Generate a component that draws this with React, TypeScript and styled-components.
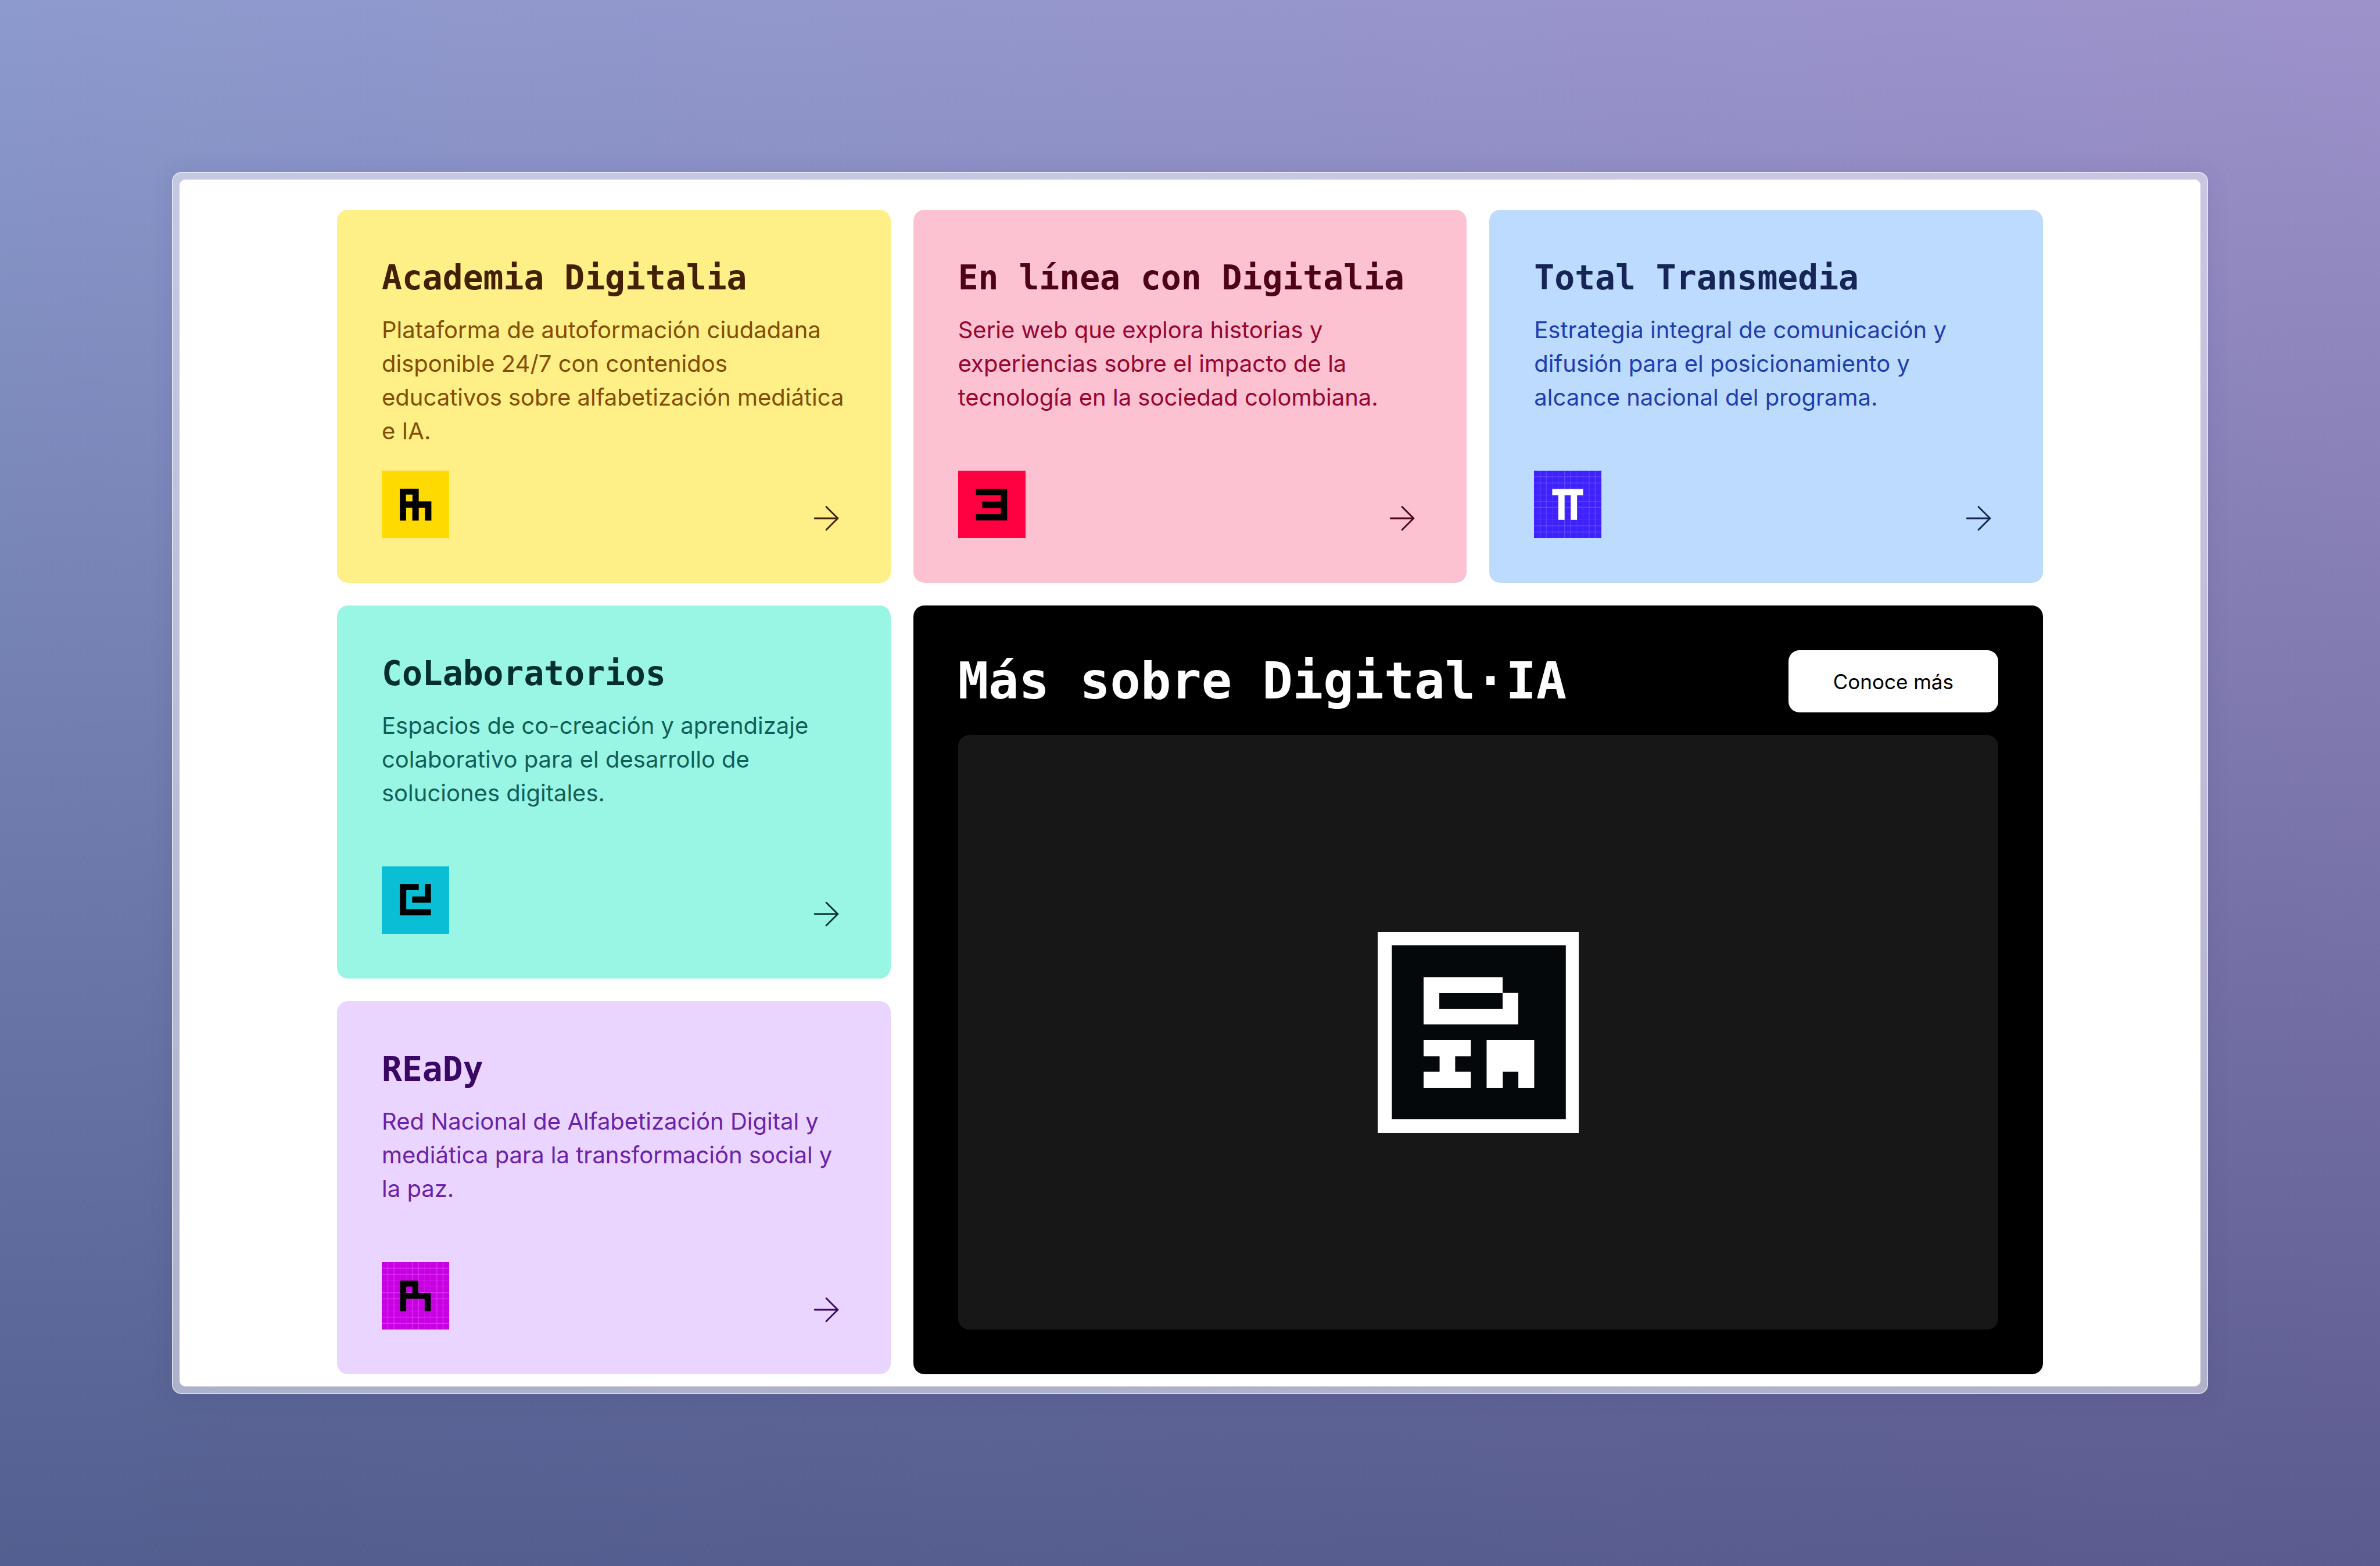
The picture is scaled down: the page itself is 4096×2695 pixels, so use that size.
import React from "react";
import styled, { createGlobalStyle } from "styled-components";
import { ArrowRight } from "lucide-react";

const GlobalStyle = createGlobalStyle`
  *, *::before, *::after { box-sizing: border-box; }
  html, body { margin: 0; padding: 0; }
  h2, p { margin: 0; }
`;

const mono = `"DejaVu Sans Mono", "Liberation Mono", monospace`;
const sans = `Inter, "Noto Sans", sans-serif`;

const Backdrop = styled.div`
  min-height: 100vh;
  padding: 296px;
  display: grid;
  background:
    linear-gradient(180deg, rgba(24, 34, 82, 0) 0%, rgba(24, 36, 82, 0.5) 100%),
    linear-gradient(90deg, #8d9acd 0%, #9e92cb 100%);
`;

const Frame = styled.div`
  padding: 11px;
  border: 2px solid rgba(255, 255, 255, 0.75);
  border-radius: 16px;
  background: rgba(255, 255, 255, 0.5);
  background-clip: padding-box;
  box-shadow: 0 4px 40px rgba(60, 50, 110, 0.12);
  display: grid;
`;

const Page = styled.main`
  padding: 52px 271px 21px;
  border-radius: 10px;
  background: #ffffff;
`;

const Grid = styled.div`
  display: grid;
  height: 100%;
  grid-template-columns: repeat(3, minmax(0, 1fr));
  grid-template-rows: repeat(3, minmax(0, 1fr));
  gap: 39px;
`;

const Card = styled.a<{ $bg: string; $ink: string }>`
  display: flex;
  flex-direction: column;
  padding: 77px;
  border-radius: 19px;
  background: ${(p) => p.$bg};
  color: ${(p) => p.$ink};
  text-decoration: none;
`;

const CardTitle = styled.h2`
  font: 700 58px/80px ${mono};
  margin-bottom: 21px;
  white-space: nowrap;
`;

const CardText = styled.p<{ $color: string }>`
  font: 400 40px/58px ${sans};
  color: ${(p) => p.$color};
`;

const CardFooter = styled.div`
  margin-top: auto;
  display: flex;
  justify-content: space-between;
  align-items: flex-end;
  height: 116px;
`;

const Glyph = styled.svg`
  display: block;
  width: 116px;
  height: 116px;
`;

const Feature = styled.section`
  grid-column: 2 / 4;
  grid-row: 2 / 4;
  display: flex;
  flex-direction: column;
  gap: 39px;
  padding: 77px;
  border-radius: 19px;
  background: #000000;
`;

const FeatureHead = styled.header`
  display: flex;
  justify-content: space-between;
  align-items: center;
`;

const FeatureTitle = styled.h2`
  font: 700 87px/107px ${mono};
  color: #ffffff;
`;

const MoreButton = styled.button`
  padding: 0 77px;
  height: 107px;
  border: 0;
  border-radius: 19px;
  background: #ffffff;
  color: #000000;
  font: 400 35px/48px ${sans};
`;

const Stage = styled.div`
  flex: 1;
  display: flex;
  align-items: center;
  justify-content: center;
  border-radius: 19px;
  background: #171717;
`;

const Emblem = styled.svg`
  width: 346px;
  height: 346px;
`;

const strong = [1, 2, 5, 6, 9, 10];

function GridLines({ color }: { color: string }) {
  return (
    <g stroke={color} strokeWidth="5">
      {Array.from({ length: 10 }, (_, i) => i + 1).map((n) => {
        const at = (n * 432) / 11;
        return (
          <path
            key={n}
            opacity={strong.includes(n) ? 1 : 0.35}
            d={`M${at} 0V432M0 ${at}H432`}
          />
        );
      })}
    </g>
  );
}

type Program = {
  title: string;
  text: string;
  bg: string;
  ink: string;
  textColor: string;
  tile: string;
  lines?: string;
  mark: string;
  markColor?: string;
};

const programs: Program[] = [
  {
    title: "Academia Digitalia",
    text: "Plataforma de autoformación ciudadana disponible 24/7 con contenidos educativos sobre alfabetización mediática e IA.",
    bg: "#feef87",
    ink: "#432004",
    textColor: "#844d06",
    tile: "#ffda00",
    mark: "M116 115H237V196H318V319H277V237H237V319H196V237H156V319H116ZM155 154V196H197V154Z",
  },
  {
    title: "En línea con Digitalia",
    text: "Serie web que explora historias y experiencias sobre el impacto de la tecnología en la sociedad colombiana.",
    bg: "#fdc2d2",
    ink: "#4d0218",
    textColor: "#980530",
    tile: "#ff0040",
    mark: "M114 117H314V318H114V278H274V239H154V198H274V157H114Z",
  },
  {
    title: "Total Transmedia",
    text: "Estrategia integral de comunicación y difusión para el posicionamiento y alcance nacional del programa.",
    bg: "#bddaff",
    ink: "#162456",
    textColor: "#1e3eae",
    tile: "#3f22fb",
    lines: "#5c48ff",
    mark: "M117 117H315V157H276V316H236V157H196V316H156V157H117Z",
    markColor: "#ffffff",
  },
  {
    title: "CoLaboratorios",
    text: "Espacios de co-creación y aprendizaje colaborativo para el desarrollo de soluciones digitales.",
    bg: "#99f6e4",
    ink: "#042f2e",
    textColor: "#115e59",
    tile: "#09bed5",
    mark: "M116 113H237V153H157V275H315V314H116ZM277 113H315V233H195V193H277Z",
  },
  {
    title: "REaDy",
    text: "Red Nacional de Alfabetización Digital y mediática para la transformación social y la paz.",
    bg: "#e9d5ff",
    ink: "#3b0764",
    textColor: "#6b21a8",
    tile: "#c800e2",
    lines: "#dc2ff7",
    mark: "M117 118H235V197H314V315H275V235H157V315H117ZM157 157V197H196V157Z",
  },
];

function ProgramCard({ p }: { p: Program }) {
  return (
    <Card href="#" $bg={p.bg} $ink={p.ink}>
      <CardTitle>{p.title}</CardTitle>
      <CardText $color={p.textColor}>{p.text}</CardText>
      <CardFooter>
        <Glyph viewBox="0 0 432 432" aria-hidden="true">
          <rect width="432" height="432" fill={p.tile} />
          {p.lines && <GridLines color={p.lines} />}
          <path d={p.mark} fill={p.markColor ?? "#000000"} fillRule="evenodd" />
        </Glyph>
        <ArrowRight size={68} strokeWidth={1} aria-hidden="true" />
      </CardFooter>
    </Card>
  );
}

export default function App() {
  return (
    <>
      <GlobalStyle />
      <Backdrop>
        <Frame>
          <Page>
            <Grid>
              {programs.slice(0, 4).map((p) => (
                <ProgramCard key={p.title} p={p} />
              ))}
              <Feature>
                <FeatureHead>
                  <FeatureTitle>Más sobre Digital·IA</FeatureTitle>
                  <MoreButton type="button">Conoce más</MoreButton>
                </FeatureHead>
                <Stage>
                  <Emblem viewBox="0 0 1292 1292" role="img" aria-label="Digital·IA">
                    <rect width="1292" height="1292" fill="#ffffff" />
                    <rect x="91" y="85" width="1118" height="1118" fill="#04080b" />
                    <path
                      fill="#ffffff"
                      fillRule="evenodd"
                      d="M295 290H803V391H903V594H295ZM396 392V493H803V392Z"
                    />
                    <path
                      fill="#ffffff"
                      d="M295 695H599V798H498V898H599V1001H295V898H398V798H295ZM700 695H1006V1001H904V898H804V1001H700Z"
                    />
                  </Emblem>
                </Stage>
              </Feature>
              {programs.slice(4).map((p) => (
                <ProgramCard key={p.title} p={p} />
              ))}
            </Grid>
          </Page>
        </Frame>
      </Backdrop>
    </>
  );
}
